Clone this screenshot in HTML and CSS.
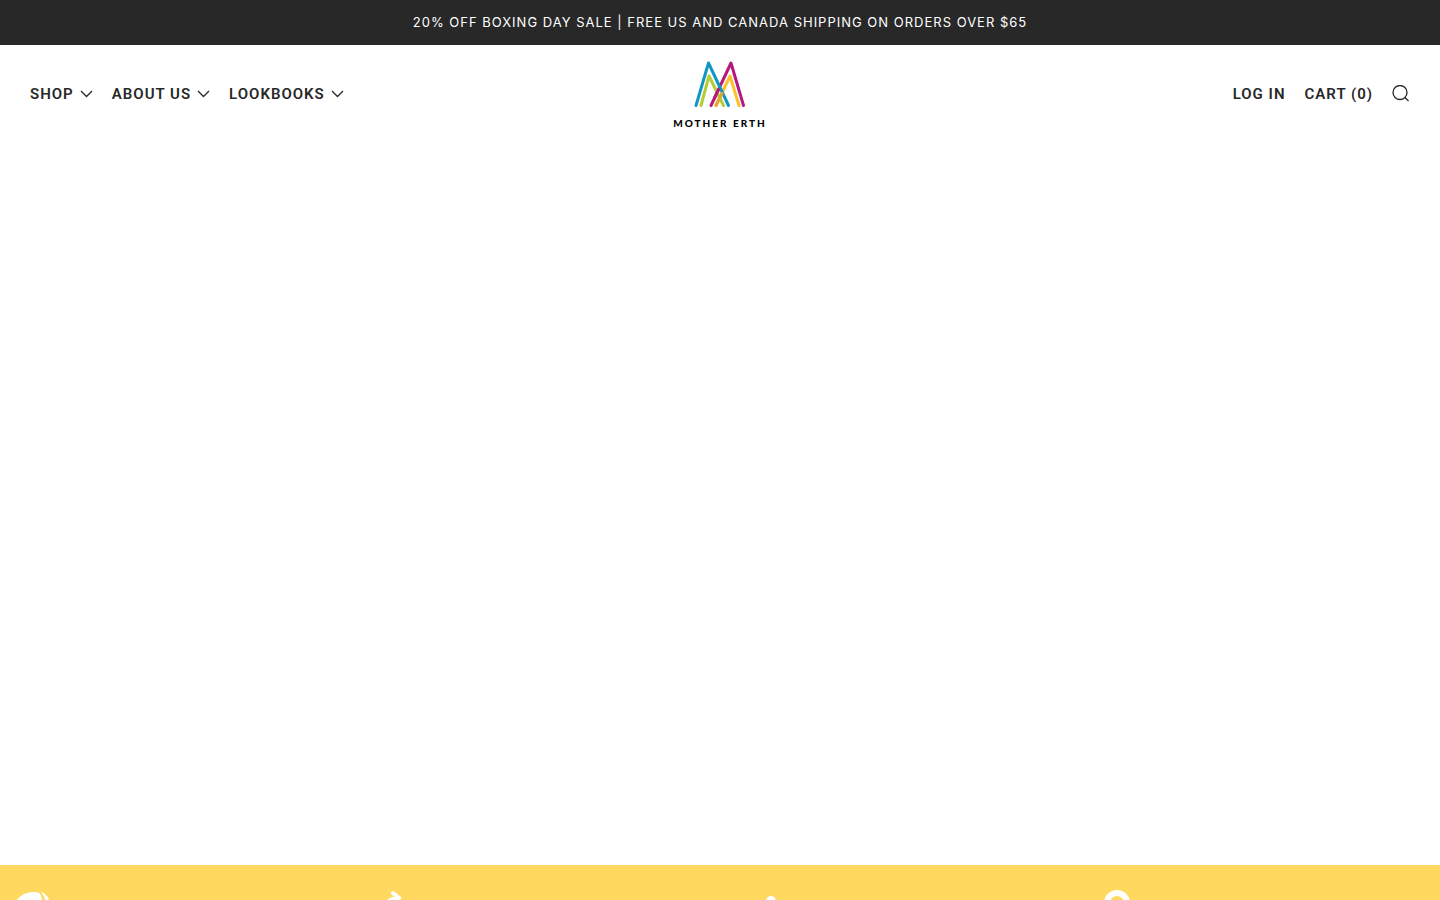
FILE: index.html
```html
<!DOCTYPE html>
<html lang="en">
<head>
  <meta charset="UTF-8">
  <meta name="viewport" content="width=device-width, initial-scale=1">
  <title>Mother Erth</title>
  <link rel="stylesheet" href="styles.css">
</head>
<body>
  <p class="announcement">20% OFF BOXING DAY SALE | FREE US AND CANADA SHIPPING ON ORDERS OVER $65</p>

  <header class="header">
    <nav class="nav" aria-label="Main">
      <a class="nav-link" href="#">SHOP
        <svg class="chevron" viewBox="0 0 13 8" aria-hidden="true"><path d="M1 1l5.500 5.500L12 1"/></svg>
      </a>
      <a class="nav-link" href="#">ABOUT US
        <svg class="chevron" viewBox="0 0 13 8" aria-hidden="true"><path d="M1 1l5.500 5.500L12 1"/></svg>
      </a>
      <a class="nav-link" href="#">LOOKBOOKS
        <svg class="chevron" viewBox="0 0 13 8" aria-hidden="true"><path d="M1 1l5.500 5.500L12 1"/></svg>
      </a>
    </nav>

    <a class="logo" href="#">
      <svg class="logo-mark" viewBox="0 0 52 48" aria-hidden="true">
        <path stroke="#b5197e" d="M17 45.500L37 3l12.500 42.500"/>
        <path stroke="#fbc02d" d="M22 45.500L36 16l9 29.500"/>
        <path stroke="#1097c2" d="M2 45.500L14.500 3l20 42.500"/>
        <path stroke="#b5cc34" d="M7 45.500L15 16l14.500 29.500"/>
        <path stroke="#b5197e" d="M20.500 38l4-8.500"/>
        <path stroke="#e3a52c" d="M22 45.500l6-12"/>
      </svg>
      <span class="logo-name">MOTHER ERTH</span>
    </a>

    <nav class="nav nav-right" aria-label="Account">
      <a class="nav-link" href="#">LOG IN</a>
      <a class="nav-link" href="#">CART (0)</a>
      <a class="search" href="#" aria-label="Search">
        <svg viewBox="0 0 18 18" aria-hidden="true"><circle cx="8" cy="7.500" r="7"/><path d="M13 12.500l3.500 3.500"/></svg>
      </a>
    </nav>
  </header>

  <main class="hero"></main>

  <section class="features">
    <div class="feature">
      <svg viewBox="0 0 60 60" aria-hidden="true">
        <path d="M4 14C8 4 17 1 24 1c5 0 6 1 7 4l3 9v20H4z"/>
        <path d="M31 1c4 1 6 4 8 7l-3 3c-1-4-3-7-5-10z"/>
      </svg>
    </div>
    <div class="feature">
      <svg viewBox="0 0 60 60" aria-hidden="true"><path class="stroke" d="M17 12c3-4 7-5 12-5M23 2l6 5-5 8"/></svg>
    </div>
    <div class="feature">
      <svg viewBox="0 0 60 60" aria-hidden="true"><circle cx="41" cy="10" r="5"/><path d="M37 12h8v30h-8z"/></svg>
    </div>
    <div class="feature">
      <svg viewBox="0 0 60 60" aria-hidden="true"><circle class="stroke ring" cx="27" cy="12" r="10"/></svg>
    </div>
  </section>
</body>
</html>
```
FILE: styles.css
```css
* {
  box-sizing: border-box;
}
body {
  margin: 0;
  height: 100vh;
  display: flex;
  flex-direction: column;
  overflow: hidden;
  font-family: Roboto, "Liberation Sans", sans-serif;
  color: #282828;
  background: #fff;
}
a {
  color: inherit;
  text-decoration: none;
}
.announcement {
  margin: 0;
  padding: 12px 20px;
  background: #282828;
  color: #fff;
  font-family: Inter, sans-serif;
  font-size: 13px;
  line-height: 21px;
  letter-spacing: 1px;
  text-align: center;
}
.header {
  display: grid;
  grid-template-columns: 1fr auto 1fr;
  align-items: center;
  height: 100px;
  padding: 0 30px;
}
.nav {
  display: flex;
  align-items: center;
  gap: 19px;
  padding-bottom: 2px;
}
.nav-right {
  justify-content: flex-end;
}
.nav-link {
  display: flex;
  align-items: center;
  gap: 6px;
  font-size: 15px;
  font-weight: 600;
  line-height: 24px;
  letter-spacing: 1px;
}
.chevron {
  width: 13px;
  height: 8px;
}
.chevron path,
.search svg {
  fill: none;
  stroke: #282828;
  stroke-width: 1.3;
}
.search svg {
  display: block;
  width: 18px;
  height: 18px;
}
.logo {
  display: flex;
  flex-direction: column;
  align-items: center;
  gap: 8px;
}
.logo-mark {
  width: 52px;
  height: 48px;
  fill: none;
  stroke-width: 3;
  stroke-linecap: round;
  stroke-linejoin: round;
}
.logo-name {
  color: #000;
  font-family: Lato, sans-serif;
  font-size: 10px;
  font-weight: 900;
  line-height: 14px;
  letter-spacing: 2px;
}
.hero {
  flex: 0 0 80vh;
}
.features {
  flex: 1;
  display: grid;
  grid-template-columns: repeat(4, 1fr);
  overflow: hidden;
  background: #ffd95f;
}
.feature {
  padding: 26px 10px;
}
.feature svg {
  display: block;
  width: 60px;
  height: 60px;
  overflow: visible;
  fill: #fff;
}
.feature .stroke {
  fill: none;
  stroke: #fff;
  stroke-width: 4;
  stroke-linecap: round;
}
.feature .ring {
  stroke-width: 6;
}
```
